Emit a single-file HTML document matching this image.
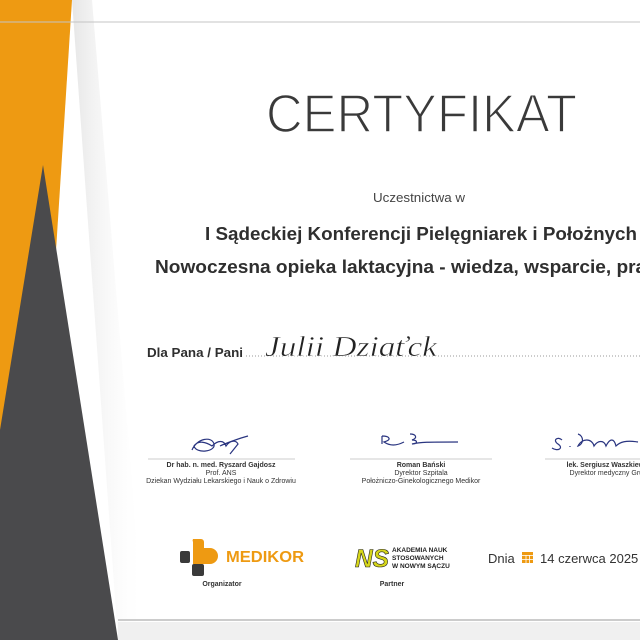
<!DOCTYPE html>
<html><head><meta charset="utf-8"><style>
html,body{margin:0;padding:0;width:640px;height:640px;overflow:hidden;background:#fff}
svg{display:block}
</style></head><body>
<svg width="640" height="640" viewBox="0 0 640 640" xmlns="http://www.w3.org/2000/svg">
<defs>
<linearGradient id="sh" x1="0" x2="1" y1="0" y2="0">
<stop offset="0" stop-color="#e6e6e6"/><stop offset="1" stop-color="#fff" stop-opacity="0"/>
</linearGradient>
</defs>
<rect width="640" height="640" fill="#fff"/>
<polygon points="72,0 92,0 145,640 118,640" fill="url(#sh)"/>
<polygon points="0,0 72,0 42,470 0,470" fill="#ee9a12"/>
<polygon points="43,165 118,640 0,640 0,430" fill="#4a4a4c"/>
<line x1="0" y1="22" x2="640" y2="22" stroke="#c4c4c4" stroke-width="1"/>
<line x1="118" y1="620" x2="640" y2="620" stroke="#bbb" stroke-width="1.5"/>
<rect x="118" y="622" width="522" height="18" fill="#f0f0f0"/>

<g font-family="Liberation Sans, sans-serif" fill="#333">
<text x="266" y="132" font-size="54" textLength="311" lengthAdjust="spacingAndGlyphs" fill="#3a3a3a" stroke="#fff" stroke-width="1.6">CERTYFIKAT</text>
<text x="373" y="202" font-size="12.5" textLength="92" lengthAdjust="spacingAndGlyphs" fill="#444">Uczestnictwa w</text>
<text x="205" y="240" font-size="18" font-weight="bold" textLength="432" lengthAdjust="spacingAndGlyphs" fill="#2f2f2f">I Sądeckiej Konferencji Pielęgniarek i Położnych</text>
<text x="155" y="273" font-size="18" font-weight="bold" textLength="540" lengthAdjust="spacingAndGlyphs" fill="#2f2f2f">Nowoczesna opieka laktacyjna - wiedza, wsparcie, praktyka</text>
<text x="147" y="357" font-size="12.5" font-weight="bold" textLength="96" lengthAdjust="spacingAndGlyphs" fill="#2f2f2f">Dla Pana / Pani</text>
</g>
<line x1="246" y1="356" x2="640" y2="356" stroke="#999" stroke-width="1" stroke-dasharray="1,2"/>
<text x="265" y="356" font-family="Liberation Serif, serif" font-style="italic" font-size="28" fill="#222" stroke="#fff" stroke-width="0.5" textLength="172" lengthAdjust="spacingAndGlyphs">Julii  Dziaťck</text>

<g fill="none" stroke="#2a3580" stroke-width="1.2">
<path d="M192,450 c5,-12 20,-14 22,-6 c2,8 -18,10 -20,2 c4,-6 12,-4 18,0 c6,-6 12,-6 14,0 c4,-6 10,-6 12,-2 l-8,10 M220,446 c4,-2 20,-8 28,-10"/>
<path d="M382,436 l0,8 M382,436 c8,0 10,4 2,6 c6,4 12,4 20,0 M410,434 c6,0 8,4 2,6 c6,0 6,4 0,4 c8,-2 16,-2 46,-2"/>
<path d="M562,440 c-4,-4 -10,0 -4,4 c6,4 0,8 -6,4 M570,446 l0,1 M578,434 c6,2 6,10 0,12 c4,-8 14,-8 16,0 c4,-6 10,-6 12,0 c4,-8 8,-8 10,0 c4,-4 10,-6 22,-4"/>
</g>
<g stroke="#ccc" stroke-width="1"><line x1="148" y1="459" x2="295" y2="459"/><line x1="350" y1="459" x2="492" y2="459"/><line x1="545" y1="459" x2="640" y2="459"/></g>
<g font-family="Liberation Sans, sans-serif" text-anchor="middle" fill="#333">
<text x="221" y="467" font-size="7" font-weight="bold">Dr hab. n. med.  Ryszard Gajdosz</text>
<text x="221" y="475" font-size="7">Prof. ANS</text>
<text x="221" y="483" font-size="7">Dziekan Wydziału Lekarskiego i Nauk o Zdrowiu</text>
<text x="421" y="467" font-size="7" font-weight="bold">Roman Bański</text>
<text x="421" y="475" font-size="7">Dyrektor Szpitala</text>
<text x="421" y="483" font-size="7">Położniczo-Ginekologicznego Medikor</text>
<text x="610" y="467" font-size="7" font-weight="bold">lek. Sergiusz Waszkiewicz</text>
<text x="610" y="475" font-size="7">Dyrektor medyczny Grupy</text>
</g>

<rect x="180" y="551" width="10" height="12" rx="2" fill="#3a3a3a"/>
<rect x="192" y="564" width="12" height="12" rx="2" fill="#3a3a3a"/>
<path d="M193,539 h8 a3,3 0 0 1 3,3 v6 h6 a5,5 0 0 1 0,16 h-17 v-22 a3,3 0 0 1 0,-3z" fill="#ee9a12"/>
<text x="226" y="562" font-family="Liberation Sans, sans-serif" font-size="16" font-weight="bold" fill="#ee9a12" textLength="78" lengthAdjust="spacingAndGlyphs">MEDIKOR</text>
<text x="222" y="586" font-family="Liberation Sans, sans-serif" font-size="7" font-weight="bold" fill="#333" text-anchor="middle">Organizator</text>

<text x="355" y="567" font-family="Liberation Sans, sans-serif" font-size="25" font-style="italic" font-weight="bold" fill="#d6d61a" stroke="#222" stroke-width="0.6" textLength="34" lengthAdjust="spacingAndGlyphs">NS</text>
<g font-family="Liberation Sans, sans-serif" font-size="6.5" font-weight="bold" fill="#222">
<text x="392" y="552">AKADEMIA NAUK</text><text x="392" y="560">STOSOWANYCH</text><text x="392" y="568">W NOWYM SĄCZU</text>
</g>
<text x="392" y="586" font-family="Liberation Sans, sans-serif" font-size="7" font-weight="bold" fill="#333" text-anchor="middle">Partner</text>

<text x="488" y="563" font-family="Liberation Sans, sans-serif" font-size="13" fill="#333">Dnia</text>
<rect x="522" y="552" width="11" height="11" fill="#ee9a12"/>
<g stroke="#fff" stroke-width="0.8"><line x1="522" y1="555.5" x2="533" y2="555.5"/><line x1="526" y1="555" x2="526" y2="563"/><line x1="529.5" y1="555" x2="529.5" y2="563"/><line x1="522" y1="559.5" x2="533" y2="559.5"/></g>
<text x="540" y="563" font-family="Liberation Sans, sans-serif" font-size="13" fill="#333">14 czerwca 2025</text>
</svg>
</body></html>
